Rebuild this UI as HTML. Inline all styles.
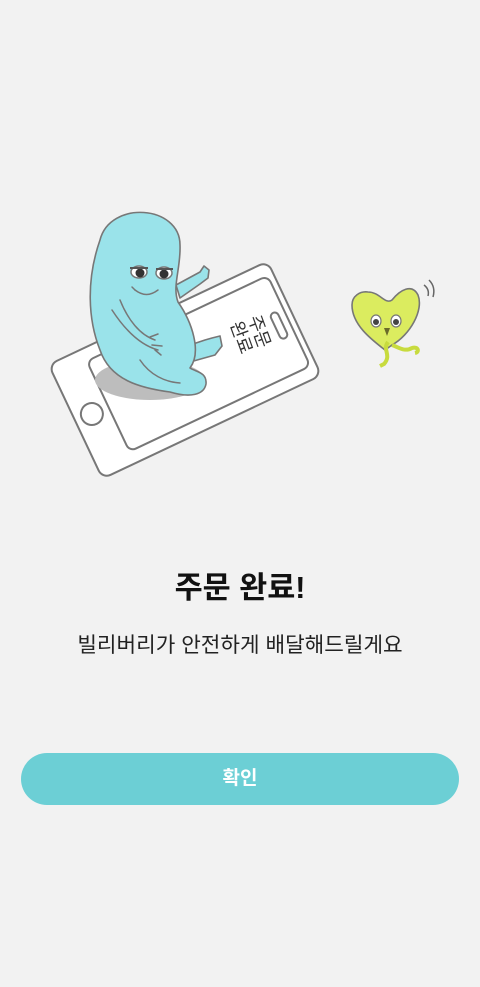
<!DOCTYPE html>
<html><head><meta charset="utf-8"><style>
html,body{margin:0;padding:0;background:#f2f2f2;width:480px;height:987px;overflow:hidden;font-family:"Liberation Sans","Noto Sans CJK KR",sans-serif}
.t{position:absolute;left:0;width:480px;text-align:center}
</style></head><body>
<svg width="480" height="520" style="position:absolute;left:0;top:0" viewBox="0 0 480 520">
<g stroke="#777" stroke-width="2" fill="#fff">
<g transform="translate(185,370) rotate(-25.3)">
<rect x="-121" y="-63" width="242" height="126" rx="9"/>
<rect x="-85" y="-50" width="200" height="100" rx="7"/>
<circle cx="-103" cy="0" r="11"/>
<rect x="100" y="-14" width="8" height="28" rx="4"/>
</g>
</g>
<text x="0" y="0" font-size="18" fill="#333" transform="translate(248,318) rotate(70)" font-family="Liberation Sans,Noto Sans CJK KR,sans-serif">주문</text>
<text x="0" y="0" font-size="18" fill="#333" transform="translate(230,324) rotate(70)" font-family="Liberation Sans,Noto Sans CJK KR,sans-serif">완료</text>
<ellipse cx="150" cy="380" rx="55" ry="20" fill="#bdbdbd"/>
<g fill="#9ae3ea" stroke="#777" stroke-width="1.6" stroke-linejoin="round">
<path d="M176,285 L200,272 L204,266 L209,270 L208,278 L200,284 L180,298 Z"/>
<path d="M175,350 L205,340 L212,338 L220,336 L222,346 L215,355 L190,362 Z"/>
<path d="M100,240 C110,200 180,205 180,245 C181,268 172,286 178,302 C192,322 202,352 190,368 C196,372 207,372 206,384 C204,395 190,398 170,392 C140,388 110,380 100,350 C88,320 86,280 100,240 Z"/>
</g>
<g fill="none" stroke="#777" stroke-width="1.5" stroke-linecap="round">
<path d="M112,310 C125,330 140,345 158,350"/>
<path d="M120,300 C128,320 140,335 155,340"/>
<path d="M150,337 L158,334 M152,345 L162,346 M155,350 L161,355"/>
<path d="M135,290 C143,296 150,296 158,290"/>
<path d="M135,290 L132,287"/>
<path d="M140,360 C150,375 165,382 180,383"/>
</g>
<g stroke="#777" stroke-width="1.5">
<ellipse cx="139" cy="272" rx="8" ry="6" fill="#fff"/>
<ellipse cx="164" cy="273" rx="8" ry="6" fill="#fff"/>
</g>
<circle cx="140" cy="273" r="4.5" fill="#333"/>
<circle cx="164" cy="274" r="4.5" fill="#333"/>
<path d="M130,268 L148,268 M156,269 L173,269" stroke="#555" stroke-width="2"/>
<g stroke="#777" stroke-width="1.6" stroke-linejoin="round">
<path d="M368,292 C380,292 385,305 392,300 C400,290 412,283 418,295 C424,310 410,335 392,345 L385,350 C372,340 352,325 352,305 C352,296 360,291 368,292 Z" fill="#dbec5f"/>
<path d="M388,342 C382,350 392,355 384,364 L380,366 M392,345 C400,348 405,352 412,348 C418,346 420,352 415,353" fill="none" stroke="#c8db3e" stroke-width="4"/>
</g>
<g stroke="#777" stroke-width="1.2">
<ellipse cx="376" cy="321" rx="5" ry="6" fill="#fff"/>
<ellipse cx="396" cy="321" rx="5" ry="6" fill="#fff"/>
</g>
<circle cx="376" cy="322" r="3" fill="#444"/><circle cx="396" cy="322" r="3" fill="#444"/>
<path d="M384,328 L390,328 L387,336 Z" fill="#6b6b2a"/>
<path d="M424,285 C428,288 429,292 428,296 M429,280 C433,284 435,290 433,297" stroke="#666" stroke-width="1.5" fill="none"/>
</svg>
<div class="t" style="top:563px;font-size:30.5px;font-weight:bold;color:#111">주문 완료!</div>
<div class="t" style="top:628px;font-size:21.3px;color:#222">빌리버리가 안전하게 배달해드릴게요</div>
<div style="position:absolute;left:21px;top:753px;width:438px;height:52px;border-radius:26px;background:#6ccfd5;color:#fff;font-size:19px;font-weight:bold;text-align:center;line-height:52px">확인</div>
</body></html>
